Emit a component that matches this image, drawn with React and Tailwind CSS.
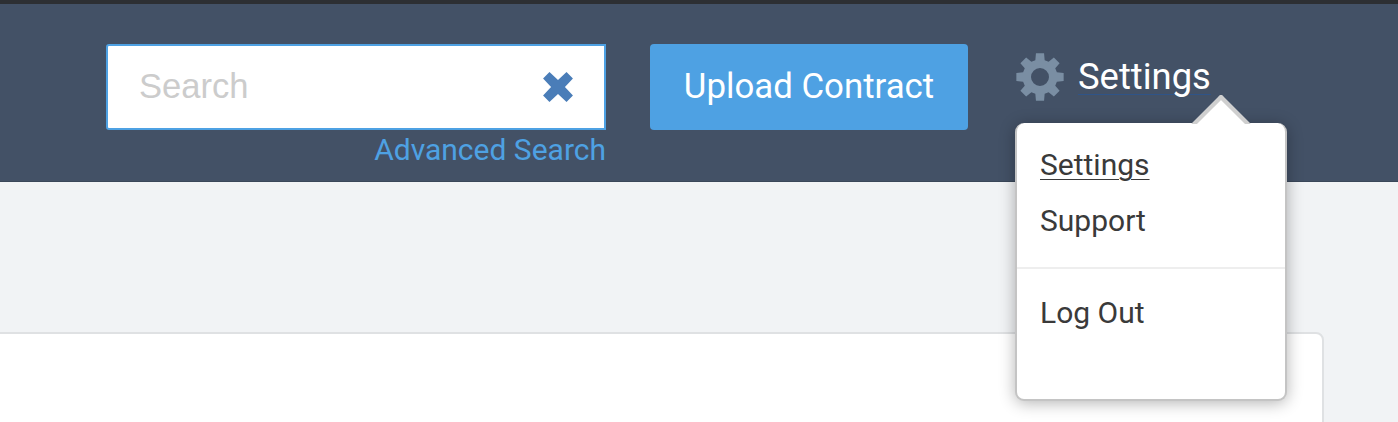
import React from 'react';

// eight tooth cog, same shape as the old font-awesome one
function Cog({ className }) {
  const pts = [];
  for (let i = 0; i < 8; i++) {
    const a = (i * Math.PI) / 4 - Math.PI / 2;
    const tooth = [
      [-0.27, 17.5],
      [-0.17, 24],
      [0.17, 24],
      [0.27, 17.5],
    ];
    tooth.forEach(([d, r]) => {
      pts.push(`${(24 + r * Math.cos(a + d)).toFixed(2)} ${(24 + r * Math.sin(a + d)).toFixed(2)}`);
    });
  }
  const d = `M${pts.join('L')}Z M24 15a9 9 0 1 0 0 18a9 9 0 1 0 0-18Z`;
  return (
    <svg viewBox="0 0 48 48" className={className}>
      <path d={d} fill="currentColor" fillRule="evenodd" />
    </svg>
  );
}

function Cross({ className }) {
  return (
    <svg viewBox="0 0 30 30" className={className}>
      <path
        d="M7 1L15 8.5L23 1L29 7L21.5 15L29 23L23 29L15 21.5L7 29L1 23L8.5 15L1 7Z"
        fill="currentColor"
      />
    </svg>
  );
}

export default function App() {
  return (
    <div className="relative h-[422px] w-[1398px] overflow-hidden bg-[#f1f3f5] font-['Roboto',sans-serif]">
      <header className="flex h-[182px] items-start border-t-[4px] border-b border-t-[#2d2f33] border-b-[#3a4759] bg-[#435166] pl-[106px] pt-[40px]">
        <div className="flex w-[500px] flex-col items-end">
          <div className="flex h-[86px] w-full items-center justify-between rounded-l-[3px] border-2 border-[#4ea1e3] bg-white pl-[31px] pr-[30px]">
            <span className="font-['Liberation_Sans',sans-serif] text-[34.6px] text-[#cccccc]">Search</span>
            <Cross className="h-[32px] w-[32px] text-[#4a7db8]" />
          </div>
          <a className="mt-[2px] text-[30px] leading-[36px] text-[#4ea1e3]">Advanced Search</a>
        </div>

        <button className="ml-[44px] h-[86px] w-[318px] rounded-[4px] bg-[#4ea1e3] pb-[2px] text-[34.8px] text-white">
          Upload Contract
        </button>

        <div className="ml-[48px] flex h-[66px] items-center">
          <Cog className="h-[48px] w-[48px] text-[#7a8ea3]" />
          <span className="ml-[14px] text-[36.4px] text-white underline decoration-[#2f5488] decoration-1 underline-offset-[5px]">
            Settings
          </span>
        </div>
      </header>

      <div className="ml-[-10px] mr-[74px] mt-[150px] h-[120px] rounded-tr-[8px] border-2 border-[#dfe1e3] bg-white" />

      {/* dropdown lies over the header and the card */}
      <div className="absolute left-[1015px] top-[123px] h-[278px] w-[272px] rounded-[9px] border-2 border-t-0 border-[#c4c4c4] bg-white pt-[22px] text-[30px] text-[#3a3a3a] shadow-[0_2px_16px_rgba(0,0,0,0.3)]">
        <div className="absolute left-[173px] top-[-28px] h-[29px] w-[62px] overflow-hidden">
          <div className="absolute left-[10px] top-[8px] h-[42px] w-[42px] rotate-45 border-l-[4px] border-t-[4px] border-[#cfcfcf] bg-white" />
        </div>
        <div className="relative flex flex-col">
          <a className="pl-[23px] leading-[40px] underline underline-offset-[4px] decoration-1">Settings</a>
          <a className="mt-[16px] pl-[23px] leading-[40px]">Support</a>
          <div className="mt-[26px] h-[2px] bg-[#eeeeee]" />
          <a className="mt-[24px] pl-[23px] leading-[40px]">Log Out</a>
        </div>
      </div>
    </div>
  );
}
